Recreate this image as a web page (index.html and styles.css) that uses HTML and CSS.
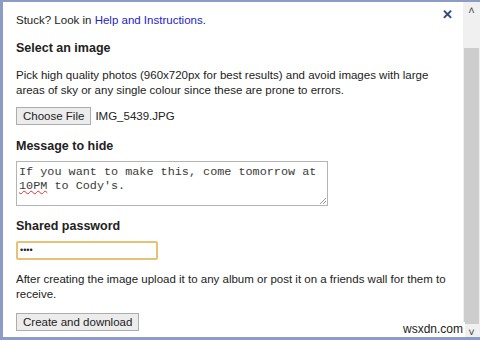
FILE: index.html
```html
<!DOCTYPE html>
<html lang="en">
<head>
    <meta charset="UTF-8">
    <title>Hide a message</title>
    <link rel="stylesheet" href="styles.css">
</head>
<body>
    <div class="window">
        <div class="content">
            <span class="close">&#x2715;</span>
            <p class="help">Stuck? Look in <a href="#">Help and Instructions</a>.</p>

            <h2>Select an image</h2>
            <p class="intro">Pick high quality photos (960x720px for best results) and avoid images with large areas of sky or any single colour since these are prone to errors.</p>
            <div class="file-row">
                <button class="btn">Choose File</button>
                <span class="file-name">IMG_5439.JPG</span>
            </div>

            <h2>Message to hide</h2>
            <div class="message">If you want to make this, come tomorrow at <span class="typo">10PM</span> to Cody's.</div>

            <h2>Shared password</h2>
            <div class="password">&bull;&bull;&bull;&bull;</div>

            <p class="outro">After creating the image upload it to any album or post it on a friends wall for them to receive.</p>
            <button class="btn">Create and download</button>
        </div>
        <div class="scrollbar">
            <div class="arrow">&#x2C4;</div>
            <div class="track"><div class="thumb"></div></div>
            <div class="arrow">&#x2C5;</div>
        </div>
        <span class="watermark">wsxdn.com</span>
    </div>
</body>
</html>
```

FILE: styles.css
```css
body {
    margin: 0;
    font-family: "Liberation Sans", Arial, sans-serif;
    font-size: 11.5px;
    color: #222;
    background: #fff;
}
.window {
    position: relative;
    height: 340px;
    box-sizing: border-box;
    border-top: 2px solid #8d9cc4;
    border-left: 3px solid #8d9cc4;
    border-bottom: 3px solid #8d9cc4;
    display: flex;
    overflow: hidden;
}
.content {
    flex: 1;
    position: relative;
    padding: 11px 13px 0 13px;
}
.close {
    position: absolute;
    top: 5px;
    right: 10px;
    color: #33457c;
    font-size: 13px;
    font-weight: bold;
}
p {
    margin: 0;
    line-height: 15px;
}
.help {
    margin-bottom: 12px;
}
.intro {
    margin: 12px 0 9px;
}
.outro {
    margin: 12px 0 11px;
}
a {
    color: #2323c8;
    text-decoration: none;
}
h2 {
    font-size: 12.5px;
    margin: 0 0 7px;
    line-height: 16px;
}
.btn {
    font-family: "Liberation Sans", Arial, sans-serif;
    font-size: 11.5px;
    color: #222;
    background: #ececec;
    border: 1px solid #adadad;
    border-radius: 0;
    padding: 0 6px;
    height: 18px;
    line-height: 14px;
}
.file-row {
    display: flex;
    align-items: center;
    gap: 4px;
    margin-bottom: 13px;
}
.message {
    width: 306px;
    height: 33px;
    border: 1px solid #b4b4b4;
    padding: 3px 2px 7px;
    font-family: "Liberation Mono", "Courier New", monospace;
    font-size: 11.8px;
    line-height: 14px;
    color: #3a3a3a;
    margin-bottom: 12px;
    position: relative;
}
.message::after {
    content: "";
    position: absolute;
    right: 1px;
    bottom: 1px;
    width: 6px;
    height: 6px;
    background: linear-gradient(135deg, transparent 45%, #999 45%, #999 55%, transparent 55%, transparent 70%, #999 70%, #999 80%, transparent 80%);
}
.typo {
    text-decoration: underline wavy #e03030;
    text-decoration-thickness: 1px;
}
.password {
    width: 134px;
    height: 15px;
    border: 2px solid #e6c176;
    border-radius: 2px;
    padding: 0 2px;
    font-size: 9px;
    line-height: 15px;
}
.scrollbar {
    width: 17px;
    background: #f0f0f0;
    display: flex;
    flex-direction: column;
}
.arrow {
    height: 17px;
    font-size: 11px;
    line-height: 17px;
    text-align: center;
    color: #444;
}
.track {
    flex: 1;
    padding: 29px 0 0;
}
.thumb {
    height: 276px;
    background: #cdcdcd;
    margin: 0 1px;
}
.watermark {
    position: absolute;
    right: 15px;
    bottom: 0;
    background: #fff;
    color: #222;
    font-size: 12px;
    padding: 0 2px;
    line-height: 15px;
}
```
